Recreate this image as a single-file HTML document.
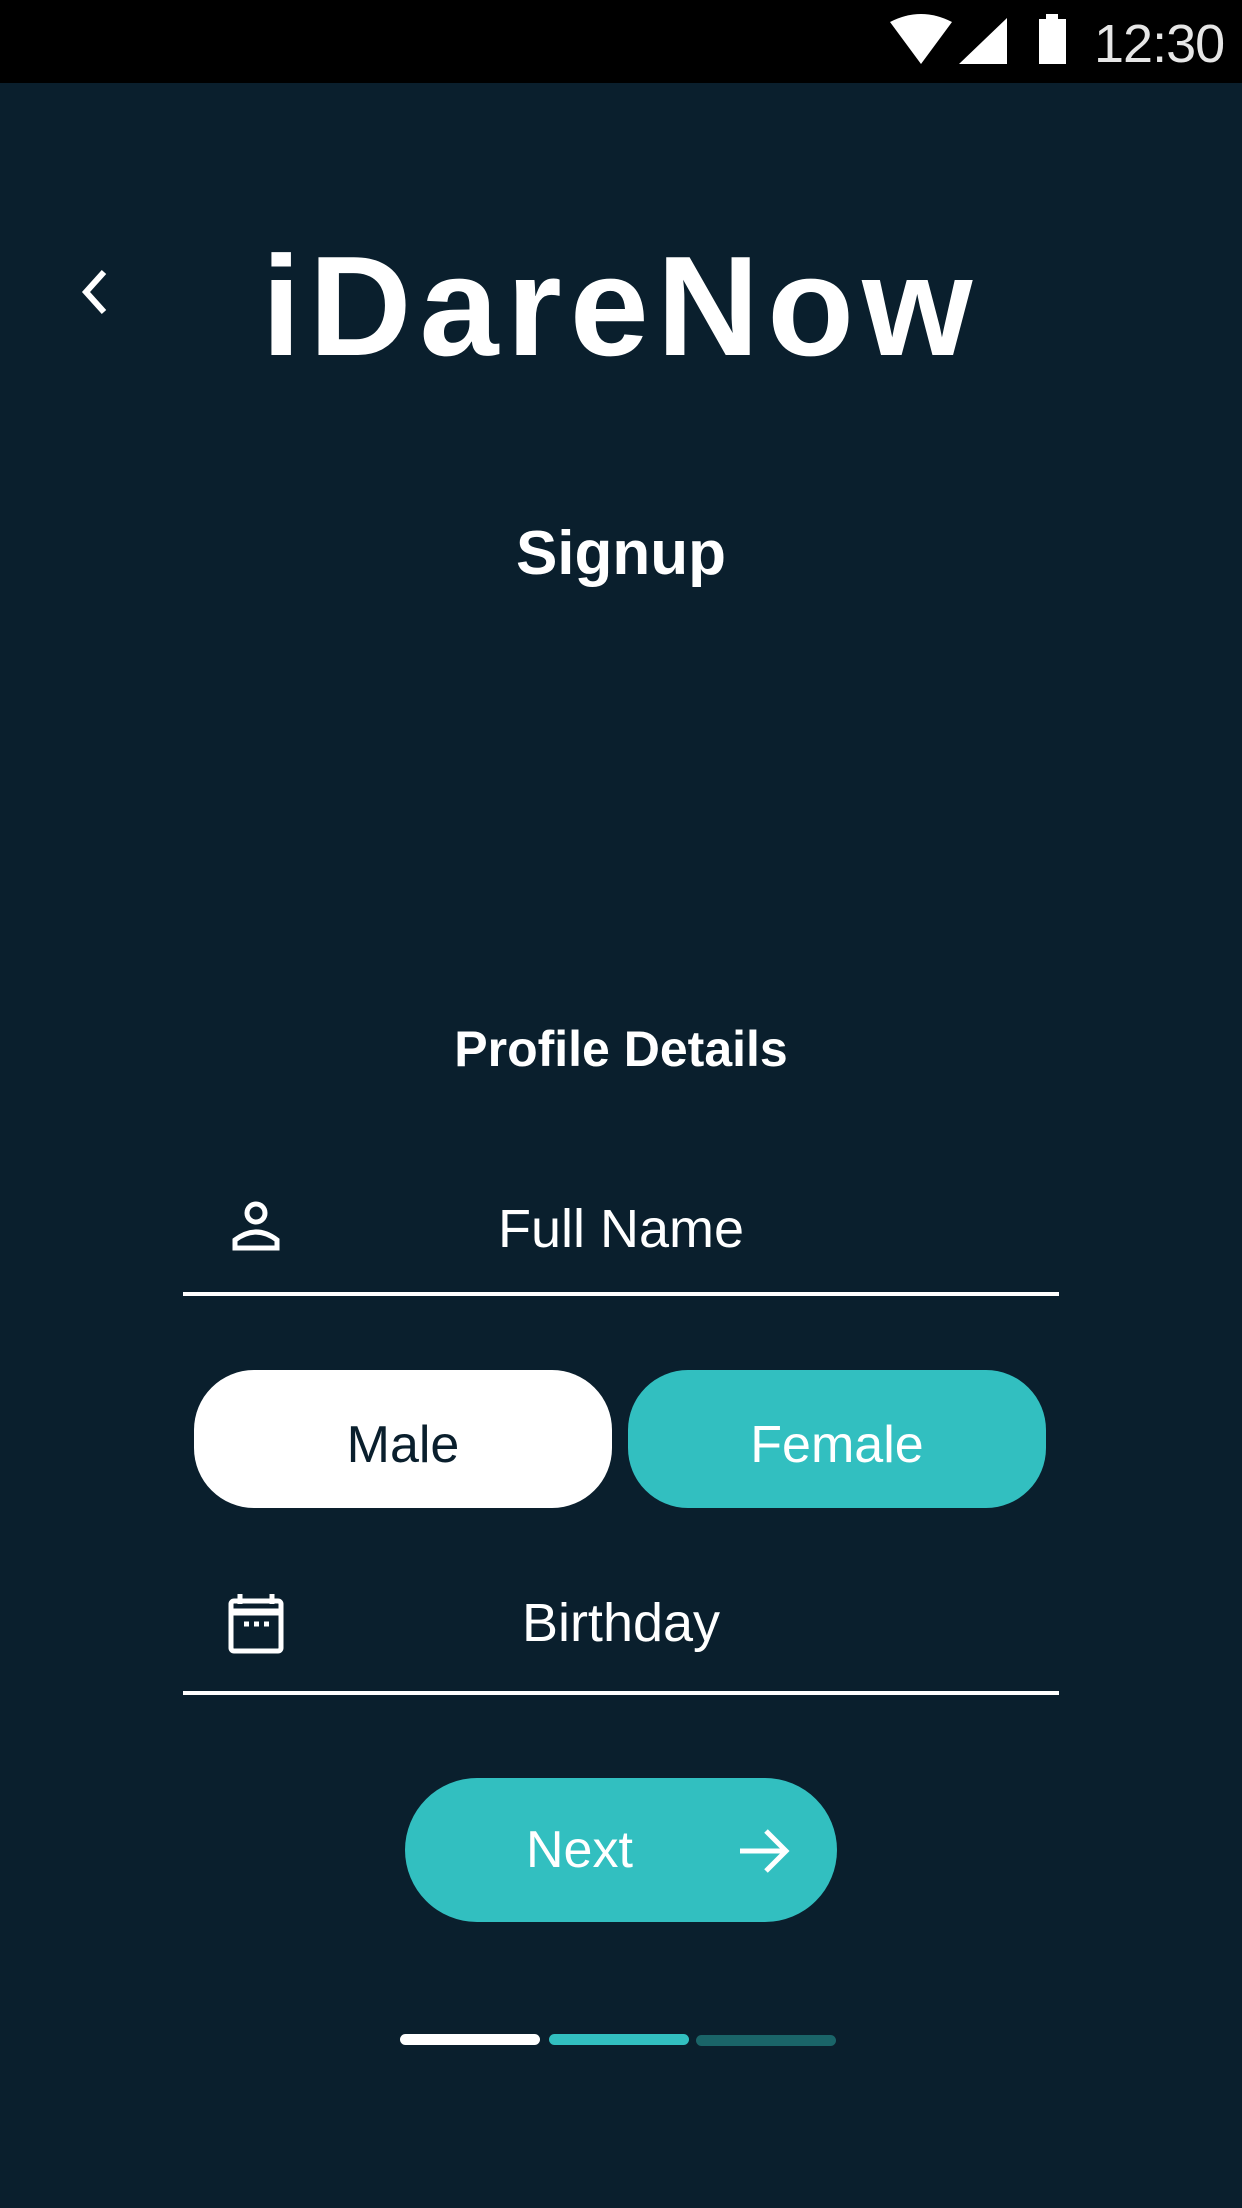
<!DOCTYPE html>
<html><head><meta charset="utf-8"><style>
html,body{margin:0;padding:0;}
body{width:1242px;height:2208px;background:#0a1f2d;position:relative;overflow:hidden;font-family:"Liberation Sans",sans-serif;color:#fff;}
.abs{position:absolute;}
.t{position:absolute;white-space:nowrap;line-height:1;}
</style></head><body>
<div class="abs" style="left:0;top:0;width:1242px;height:83px;background:#000"></div>
<svg class="abs" style="left:880px;top:14px" width="140" height="54" viewBox="0 0 140 54">
 <path d="M10 8 Q41 -8 72 8 L41 50 Z" fill="#fff"/>
 <path d="M127 4 L127 50 L79 50 Z" fill="#fff"/>
</svg>
<svg class="abs" style="left:1036px;top:14px" width="36" height="52"><rect x="10" y="0" width="12" height="6" fill="#fff"/><rect x="3" y="5" width="27" height="45" fill="#fff"/></svg>
<div class="t" style="left:1094px;top:17px;font-size:54px;color:#e6e6e6;letter-spacing:-1px;">12:30</div>

<svg class="abs" style="left:74px;top:266px" width="40" height="52"><path d="M30 6 L12 26 L30 46" stroke="#fff" stroke-width="6" fill="none"/></svg>
<div class="t" style="left:0;width:1242px;text-align:center;top:236px;font-size:142px;font-weight:bold;letter-spacing:8px;">iDareNow</div>
<div class="t" style="left:0;width:1242px;text-align:center;top:523px;font-size:62px;font-weight:bold;">Signup</div>
<div class="t" style="left:0;width:1242px;text-align:center;top:1024px;font-size:50px;font-weight:bold;">Profile Details</div>

<svg class="abs" style="left:228px;top:1198px" width="56" height="56" viewBox="0 0 56 56" fill="none" stroke="#fff" stroke-width="5">
 <circle cx="28" cy="15" r="9"/><path d="M7 50 V42 Q28 26 49 42 V50 Z"/></svg>
<div class="t" style="left:0;width:1242px;text-align:center;top:1202px;font-size:54px;">Full Name</div>
<div class="abs" style="left:183px;top:1292px;width:876px;height:4px;background:#fff"></div>

<div class="abs" style="left:194px;top:1370px;width:418px;height:138px;border-radius:60px;background:#fff"></div>
<div class="t" style="left:194px;width:418px;text-align:center;top:1419px;font-size:52px;color:#0a1f2d;">Male</div>
<div class="abs" style="left:628px;top:1370px;width:418px;height:138px;border-radius:60px;background:#32bfc0"></div>
<div class="t" style="left:628px;width:418px;text-align:center;top:1419px;font-size:52px;">Female</div>

<svg class="abs" style="left:226px;top:1592px" width="60" height="64" viewBox="0 0 60 64" fill="none" stroke="#fff" stroke-width="5">
 <rect x="5" y="9" width="50" height="50" rx="3"/><path d="M5 20 H55" stroke-width="7"/><path d="M14 2 V12 M46 2 V12"/>
 <path d="M18 32 h5 M28 32 h5 M38 32 h5" stroke-width="5"/></svg>
<div class="t" style="left:0;width:1242px;text-align:center;top:1596px;font-size:54px;">Birthday</div>
<div class="abs" style="left:183px;top:1691px;width:876px;height:4px;background:#fff"></div>

<div class="abs" style="left:405px;top:1778px;width:432px;height:144px;border-radius:72px;background:#32bfc0"></div>
<div class="t" style="left:526px;top:1824px;font-size:52px;">Next</div>
<svg class="abs" style="left:736px;top:1826px" width="56" height="50" viewBox="0 0 56 50" fill="none" stroke="#fff" stroke-width="5"><path d="M4 25 H50 M30 5 L50 25 L30 45"/></svg>

<div class="abs" style="left:400px;top:2034px;width:140px;height:11px;border-radius:6px;background:#fff"></div>
<div class="abs" style="left:549px;top:2034px;width:140px;height:11px;border-radius:6px;background:#32bfc0"></div>
<div class="abs" style="left:696px;top:2035px;width:140px;height:11px;border-radius:6px;background:#1a6468"></div>
</body></html>
